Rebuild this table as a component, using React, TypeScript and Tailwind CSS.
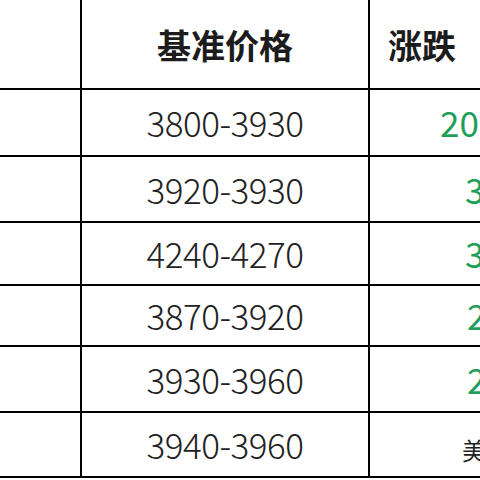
import React from 'react';

const rows = [
  { range: '3800-3930', change: '20', h: 'h-[67px]', pad: 'pl-[70px]' },
  { range: '3920-3930', change: '3', h: 'h-[66px]', pad: 'pl-[95px]' },
  { range: '4240-4270', change: '3', h: 'h-[63px]', pad: 'pl-[95px]' },
  { range: '3870-3920', change: '2', h: 'h-[61px]', pad: 'pl-[97px]' },
  { range: '3930-3960', change: '2', h: 'h-[66px]', pad: 'pl-[97px]' },
  { range: '3940-3960', change: '', h: 'h-[65px]', pad: 'pl-[92px]' },
];

const font = { fontFamily: '"Noto Sans CJK SC", "Noto Sans", sans-serif' };

export default function App() {
  return (
    <div className="w-[480px] h-[480px] overflow-hidden bg-white" style={font}>
      <div className="w-[700px]">
        {/* Header */}
        <div className="flex h-[90px] border-b-2 border-black">
          <div className="w-[82px] shrink-0 border-r-2 border-black" />
          <div className="w-[288px] shrink-0 border-r-2 border-black flex items-center justify-center">
            <span className="text-[34px] font-bold text-[#1c1c1c] tracking-[0px]">基准价格</span>
          </div>
          <div className="flex-1 flex items-center pl-[18px]">
            <span className="text-[34px] font-bold text-[#1c1c1c]">涨跌</span>
            <span className="text-[34px] text-[#d8d8d8] ml-[10px]">（元/吨）</span>
          </div>
        </div>

        {rows.map((r, i) => (
          <div key={i} className={`flex border-b-2 border-black ${r.h}`}>
            <div className="w-[82px] shrink-0 border-r-2 border-black" />
            <div className="w-[288px] shrink-0 border-r-2 border-black flex items-center justify-center">
              <span className="text-[35px] font-light text-[#222] tracking-[-0.5px]">{r.range}</span>
            </div>
            <div className={`flex-1 flex items-center ${r.pad}`}>
              {r.change ? (
                <span className="text-[35px] text-[#1f9e5a]">{r.change}</span>
              ) : (
                <span className="text-[24px] text-[#222] pt-[10px]">美</span>
              )}
            </div>
          </div>
        ))}
      </div>
    </div>
  );
}
